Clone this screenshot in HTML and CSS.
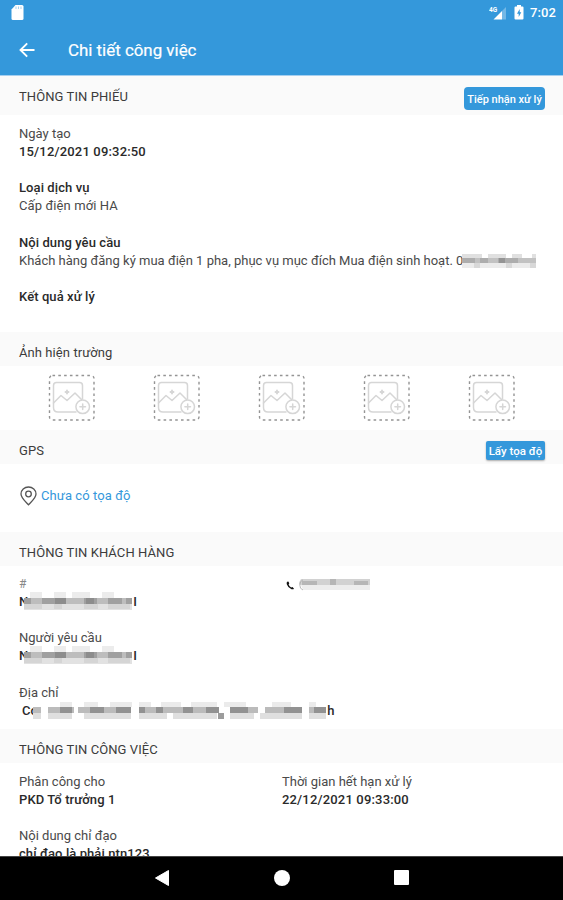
FILE: index.html
```html
<!DOCTYPE html>
<html lang="vi">

<head>
    <meta charset="UTF-8">
    <meta name="viewport" content="width=device-width, initial-scale=1.0">
    <title>Chi tiết công việc</title>
    <link rel="stylesheet" href="styles.css">
</head>

<body>
    <svg class="defs" width="0" height="0">
        <symbol id="add-photo" viewBox="0 0 48 48">
            <rect x="1.500" y="1.500" width="44.500" height="44.500" rx="3" fill="none" stroke="#949494" stroke-width="1.400" stroke-dasharray="2.600 3.200" />
            <g fill="none" stroke="#d6d6d6" stroke-width="1.500" stroke-linecap="round" stroke-linejoin="round">
                <path d="M34.500 25V11.500q0-3-3-3H8.500q-3 0-3 3v22q0 4.500 4.500 4.500H28" />
                <path d="M5.500 29l7.500-7.500 6 5 8-7.500 6.500 6.500" />
                <path d="M19 16.500v3M17.500 18h3" stroke-width="1.900" />
                <circle cx="34.700" cy="32.800" r="6.800" fill="#fff" />
                <path d="M34.700 30v5.600M31.900 32.800h5.600" />
            </g>
        </symbol>
        <symbol id="name-mosaic" viewBox="0 0 108 18">
            <path d="M6 0h12v6H6zM30 0h12v6H30zM48 0h18v6H48zM78 0h12v6H78z" fill="#ececec" />
            <path d="M0 6h108v12H0z" fill="#e2e2e2" />
            <path d="M0 12h18v5H0zM30 12h8v5h-8zM60 12h14v5H60zM84 12h22v5H84z" fill="#d5d5d5" />
            <path d="M0 6h108v6H0z" fill="#bdbdbd" />
            <path d="M0 6h7v6H0zM18 6h24v6H18zM60 6h13v6H60zM84 6h14v6H84zM102 6h6v6h-6z" fill="#a0a0a0" />
            <path d="M31 6h11v6H31zM62 6h8v6h-8z" fill="#8d8d8d" />
        </symbol>
    </svg>

    <header>
        <div class="status">
            <svg width="13" height="15" viewBox="0 0 13 15">
                <path d="M4.500 0H11q1.500 0 1.500 1.500v12Q12.500 15 11 15H2Q.5 15 .5 13.500V4.500z" fill="#fff" />
                <path d="M5 1.500v2.500M7.500 1.500v2.500M10 1.500v2.500" stroke="#a9d3ef" />
            </svg>
            <div class="status-right">
                <svg class="signal" width="18" height="16" viewBox="0 0 18 16">
                    <path d="M17 2v12.500h-4V6z" fill="#73b8e6" />
                    <path d="M13 6v8.500H4.500z" fill="#fff" />
                    <text x="0" y="7">4G</text>
                </svg>
                <svg class="battery" width="10" height="15" viewBox="0 0 10 15">
                    <path d="M3 0h4v1.500h1.500q1 0 1 1v11q0 1-1 1h-7q-1 0-1-1v-11q0-1 1-1H3z" fill="#fff" />
                    <path d="M5.700 4L3 8.700h1.700V12L7.300 7.300H5.700z" fill="#3498db" />
                </svg>
                <span class="clock">7:02</span>
            </div>
        </div>
        <div class="appbar">
            <svg width="16" height="16" viewBox="0 0 16 16" fill="none" stroke="#fff" stroke-width="1.900">
                <path d="M15.500 8H2M8.200 1.300L1.500 8l6.700 6.700" />
            </svg>
            <h1>Chi tiết công việc</h1>
        </div>
    </header>

    <main>
        <div class="section-head tall">
            <h2>THÔNG TIN PHIẾU</h2>
            <button class="btn btn-receive">Tiếp nhận xử lý</button>
        </div>
        <div class="fields ticket">
            <div class="field">
                <p>Ngày tạo</p>
                <p class="strong date">15/12/2021 09:32:50</p>
            </div>
            <div class="field">
                <p class="strong">Loại dịch vụ</p>
                <p class="service">Cấp điện mới HA</p>
            </div>
            <div class="field">
                <p class="strong">Nội dung yêu cầu</p>
                <p class="masked request">Khách hàng đăng ký mua điện 1 pha, phục vụ mục đích Mua điện sinh hoạt. 0<svg width="74" height="14" viewBox="0 0 74 14">
                    <path d="M0 0h20v5H0zM26 0h18v5H26zM50 0h10v5H50zM70 0h4v5h-4z" fill="#e0e0e0" />
                    <path d="M0 4h74v5H0z" fill="#c2c2c2" />
                    <path d="M0 4h13v5H0zM18 4h8v5h-8zM36 4h20v5H36z" fill="#adadad" />
                    <path d="M37 4h6v5h-6z" fill="#949494" />
                    <path d="M0 9h74v5H0z" fill="#ebebeb" />
                    <path d="M12 9h6v5h-6zM44 9h6v5h-6zM68 9h6v5h-6z" fill="#d8d8d8" />
                </svg></p>
            </div>
            <div class="field">
                <p class="strong">Kết quả xử lý</p>
            </div>
        </div>

        <div class="section-head">
            <h2>Ảnh hiện trường</h2>
        </div>
        <div class="photos">
            <svg><use href="#add-photo" /></svg>
            <svg><use href="#add-photo" /></svg>
            <svg><use href="#add-photo" /></svg>
            <svg><use href="#add-photo" /></svg>
            <svg><use href="#add-photo" /></svg>
        </div>

        <div class="section-head">
            <h2>GPS</h2>
            <button class="btn btn-gps">Lấy tọa độ</button>
        </div>
        <div class="gps">
            <svg width="17" height="20" viewBox="0 0 17 20" fill="none" stroke="#555" stroke-width="1.300">
                <path d="M8.500 18.800C5.500 15.500 1 12 1 8a7.500 7 0 0 1 15 0c0 4-4.500 7.500-7.500 10.800z" />
                <circle cx="8.500" cy="8" r="2.800" />
            </svg>
            <span>Chưa có tọa độ</span>
        </div>

        <div class="section-head">
            <h2>THÔNG TIN KHÁCH HÀNG</h2>
        </div>
        <div class="fields customer">
            <div class="row">
                <div class="field">
                    <p class="hash">#</p>
                    <p class="strong masked name">N<svg width="108" height="18"><use href="#name-mosaic" /></svg>I</p>
                </div>
                <div class="field phone">
                    <svg width="9" height="9" viewBox="0 0 9 9">
                        <path d="M1.200.8Q.3 1.500.8 3.200 2 7 5.500 8.200q1.800.5 2.500-.5L6.500 6l-1.300.6Q3.300 5.600 2.600 3.500L3.300 2.300 2.300.6z" fill="#111" />
                    </svg>
                    <svg width="71" height="12" viewBox="0 0 71 12">
                        <path d="M2 0h69v6H2q-4 0 0-6z" fill="#d2d2d2" />
                        <path d="M3 2h15v4H3zM31 0h6v6h-6zM55 2h14v4H55z" fill="#b6b6b6" />
                        <path d="M2 6h69v5H4z" fill="#ededed" />
                        <path d="M4 .8Q.8 2 .8 6T4 11" fill="none" stroke="#aaa" stroke-width=".8" />
                    </svg>
                </div>
            </div>
            <div class="field">
                <p>Người yêu cầu</p>
                <p class="strong masked name">N<svg width="108" height="18"><use href="#name-mosaic" /></svg>I</p>
            </div>
            <div class="field">
                <p>Địa chỉ</p>
                <p class="strong masked address">Cơ<svg width="294" height="17" viewBox="0 0 294 17">
                    <path d="M27 0h12v5H27zM51 0h14v5H51zM77 0h22v5H77zM106 0h12v5h-12zM128 0h20v5h-20zM158 0h26v5h-26zM191 0h22v5h-22zM239 0h19v5h-19zM276 0h7v5h-7z" fill="#ebebeb" />
                    <path d="M0 11h8v6H0zM15 11h24v6H15zM51 11h47v6H51zM106 11h28v6h-28zM140 11h44v6h-44zM197 11h24v6h-24zM227 11h42v6h-42zM276 11h17v6h-17z" fill="#dfdfdf" />
                    <path d="M0 5h8v6H0zM15 5h26v6H15zM45 5h53v6H45zM106 5h80v6h-80zM197 5h28v6h-28zM232 5h37v6h-37zM276 5h17v6h-17z" fill="#bbb" />
                    <path d="M27 5h12v6H27zM57 5h14v6H57zM83 5h15v6H83zM106 5h6v6h-6zM123 5h7v6h-7zM150 5h10v6h-10zM173 5h13v6h-13zM197 5h18v6h-18zM251 5h18v6h-18zM281 5h12v6h-12z" fill="#929292" />
                    <path d="M185 11h6v6h-6z" fill="#9c9c9c" />
                </svg>h</p>
            </div>
        </div>

        <div class="section-head">
            <h2>THÔNG TIN CÔNG VIỆC</h2>
        </div>
        <div class="fields">
            <div class="row">
                <div class="field">
                    <p>Phân công cho</p>
                    <p class="strong">PKD Tổ trưởng 1</p>
                </div>
                <div class="field">
                    <p>Thời gian hết hạn xử lý</p>
                    <p class="strong date">22/12/2021 09:33:00</p>
                </div>
            </div>
            <div class="field">
                <p>Nội dung chỉ đạo</p>
                <p class="strong">chỉ đạo là phải ntn123</p>
            </div>
        </div>
    </main>

    <nav>
        <svg width="16" height="18" viewBox="0 0 16 18">
            <path d="M14.500 1.500v15L1.500 9z" fill="#fff" stroke="#fff" stroke-linejoin="round" />
        </svg>
        <span class="home"></span>
        <span class="recent"></span>
    </nav>
</body>

</html>
```

FILE: styles.css
```css
* {
    box-sizing: border-box;
    margin: 0;
    padding: 0;
}

body {
    display: flex;
    flex-direction: column;
    height: 900px;
    overflow: hidden;
    background: #fff;
    color: #4a4a4a;
    font-family: Roboto, "Liberation Sans", sans-serif;
    font-size: 13px;
    line-height: 18px;
}

svg {
    display: block;
    flex: none;
}

.defs {
    position: absolute;
}

header {
    flex: none;
    height: 76px;
    background: #3498db;
    color: #fff;
    border-bottom: 1px solid #a5cff0;
}

.status {
    display: flex;
    justify-content: space-between;
    align-items: center;
    height: 25px;
    padding: 0 7px 0 11px;
}

.status-right {
    display: flex;
    align-items: center;
}

.signal text {
    fill: #fff;
    font-size: 6.5px;
    font-weight: 700;
}

.battery {
    margin: 0 6px 0 7px;
}

.clock {
    font-size: 13px;
    font-weight: 500;
    letter-spacing: 0.1px;
}

.appbar {
    display: flex;
    align-items: center;
    gap: 33px;
    height: 50px;
    padding-left: 19px;
}

h1 {
    font-size: 16.9px;
    font-weight: 400;
    -webkit-text-stroke: 0.2px #fff;
}

main {
    flex: 1;
    min-height: 0;
    overflow: hidden;
}

.section-head {
    display: flex;
    justify-content: space-between;
    align-items: center;
    height: 34px;
    padding: 8px 18px 0 19px;
    background: #fafafa;
}

.section-head.tall {
    height: 39px;
    padding-top: 2px;
}

h2 {
    font-size: 13px;
    font-weight: 400;
    letter-spacing: 0.08px;
    color: #3c3c3c;
}

.btn {
    border: none;
    background: #3498db;
    color: #fff;
    font-family: inherit;
    font-weight: 500;
    white-space: nowrap;
}

.btn-receive {
    width: 81px;
    height: 23px;
    margin-top: 4px;
    padding-top: 2px;
    border-radius: 4px;
    font-size: 11px;
}

.btn-gps {
    width: 59px;
    height: 19px;
    margin-top: -2px;
    padding-top: 2px;
    border-radius: 2px;
    box-shadow: 0 1px 2px #aaa;
    font-size: 11.5px;
}

.fields {
    display: flex;
    flex-direction: column;
    gap: 18.4px;
    padding: 10px 19px 0;
}

.ticket {
    height: 217px;
}

.field p {
    height: 18px;
    white-space: nowrap;
}

.strong {
    color: #2a2a2a;
    font-weight: 500;
    letter-spacing: 0.08px;
}

.date {
    letter-spacing: 0.17px;
}

.service {
    letter-spacing: 0.1px;
}

.row {
    display: grid;
    grid-template-columns: 263px 1fr;
}

/* mosaic overlaps the letter before it */
.field .masked {
    display: flex;
    align-items: center;
    white-space: pre;
}

.request svg {
    margin-left: -1px;
}

.name svg {
    margin: -2px 1px 0 -4px;
}

.address {
    padding-left: 3px;
}

.address svg {
    margin: -1px 0 0 -5px;
}

.hash {
    font-size: 12px;
    color: #888;
}

.photos {
    display: flex;
    justify-content: space-between;
    height: 64px;
    padding: 8px 47px 0 48px;
}

.photos svg {
    width: 48px;
    height: 48px;
}

.gps {
    display: flex;
    align-items: center;
    gap: 4px;
    height: 68px;
    padding: 0 0 5px 20px;
    color: #3498db;
    letter-spacing: 0.08px;
}

.customer {
    height: 163px;
    padding-top: 9px;
}

.phone {
    display: flex;
    gap: 4px;
    padding-left: 4px;
}

.phone svg {
    margin-top: 4px;
}

.phone svg:first-child {
    margin-top: 6px;
}

nav {
    display: flex;
    flex: none;
    justify-content: center;
    align-items: center;
    gap: 104px;
    height: 44px;
    padding: 0 1px 2px 0;
    border-top: 1px solid #444;
    background: #000;
}

.home {
    width: 16px;
    height: 16px;
    border-radius: 50%;
    background: #fff;
}

.recent {
    width: 15px;
    height: 15px;
    border-radius: 1px;
    background: #fff;
}
```
